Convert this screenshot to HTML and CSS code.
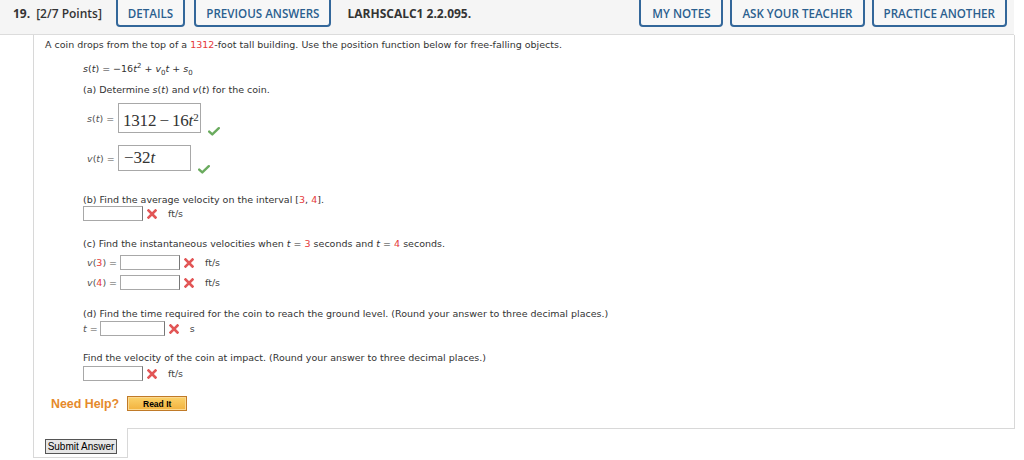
FILE: index.html
```html
<!DOCTYPE html>
<html>
<head>
<meta charset="utf-8">
<link rel="stylesheet" href="styles.css">
</head>
<body>
<div class="header">
  <span class="qnum">19.</span>
  <span class="pts">[2/7 Points]</span>
  <button class="hbtn first">DETAILS</button>
  <button class="hbtn">PREVIOUS ANSWERS</button>
  <span class="code">LARHSCALC1 2.2.095.</span>
  <div class="right">
    <button class="hbtn notes">MY NOTES</button>
    <button class="hbtn">ASK YOUR TEACHER</button>
    <button class="hbtn">PRACTICE ANOTHER</button>
  </div>
</div>
<div class="content">
  <div class="line intro">A coin drops from the top of a <span class="red">1312</span>-foot tall building. Use the position function below for free-falling objects.</div>
  <div class="part">
    <div class="line formula"><i>s</i>(<i>t</i>) = &minus;16<i>t</i><sup>2</sup> + <i>v</i><sub>0</sub><i>t</i> + <i>s</i><sub>0</sub></div>
    <div class="line qa">(a) Determine <i>s</i>(<i>t</i>) and <i>v</i>(<i>t</i>) for the coin.</div>
    <div class="row srow">
      <span class="lbl"><i>s</i>(<i>t</i>) =</span>
      <span class="mathbox sbox">1312&thinsp;&minus;&thinsp;16<i>t</i><sup>2</sup></span>
      <svg class="check" width="12" height="9" viewBox="0 0 12 9"><path d="M1.2 4.6 L4.3 7.4 L10.8 1.2" fill="none" stroke="#6aab5e" stroke-width="2.4" stroke-linecap="round" stroke-linejoin="round"/></svg>
    </div>
    <div class="row vrow">
      <span class="lbl"><i>v</i>(<i>t</i>) =</span>
      <span class="mathbox vbox">&minus;32<i>t</i></span>
      <svg class="check" width="12" height="9" viewBox="0 0 12 9"><path d="M1.2 4.6 L4.3 7.4 L10.8 1.2" fill="none" stroke="#6aab5e" stroke-width="2.4" stroke-linecap="round" stroke-linejoin="round"/></svg>
    </div>

    <div class="line qb">(b) Find the average velocity on the interval [<span class="red">3</span>, <span class="red">4</span>].</div>
    <div class="row ansrow">
      <span class="field"></span>
      <svg class="xmark" width="10" height="10" viewBox="0 0 10 10"><path d="M1.5 1.5 L8.5 8.5 M8.5 1.5 L1.5 8.5" stroke="#e25656" stroke-width="2.6" stroke-linecap="square"/></svg>
      <span class="unit">ft/s</span>
    </div>

    <div class="line qc">(c) Find the instantaneous velocities when <i>t</i> = <span class="red">3</span> seconds and <i>t</i> = <span class="red">4</span> seconds.</div>
    <div class="row crow c1">
      <span class="clbl"><i>v</i>(<span class="red">3</span>) =</span>
      <span class="field"></span>
      <svg class="xmark" width="10" height="10" viewBox="0 0 10 10"><path d="M1.5 1.5 L8.5 8.5 M8.5 1.5 L1.5 8.5" stroke="#e25656" stroke-width="2.6" stroke-linecap="square"/></svg>
      <span class="unit">ft/s</span>
    </div>
    <div class="row crow c2">
      <span class="clbl"><i>v</i>(<span class="red">4</span>) =</span>
      <span class="field"></span>
      <svg class="xmark" width="10" height="10" viewBox="0 0 10 10"><path d="M1.5 1.5 L8.5 8.5 M8.5 1.5 L1.5 8.5" stroke="#e25656" stroke-width="2.6" stroke-linecap="square"/></svg>
      <span class="unit">ft/s</span>
    </div>

    <div class="line qd">(d) Find the time required for the coin to reach the ground level. (Round your answer to three decimal places.)</div>
    <div class="row drow">
      <span class="tlbl"><i>t</i> =</span>
      <span class="field wide"></span>
      <svg class="xmark" width="10" height="10" viewBox="0 0 10 10"><path d="M1.5 1.5 L8.5 8.5 M8.5 1.5 L1.5 8.5" stroke="#e25656" stroke-width="2.6" stroke-linecap="square"/></svg>
      <span class="unit">s</span>
    </div>

    <div class="line qe">Find the velocity of the coin at impact. (Round your answer to three decimal places.)</div>
    <div class="row ansrow">
      <span class="field"></span>
      <svg class="xmark" width="10" height="10" viewBox="0 0 10 10"><path d="M1.5 1.5 L8.5 8.5 M8.5 1.5 L1.5 8.5" stroke="#e25656" stroke-width="2.6" stroke-linecap="square"/></svg>
      <span class="unit">ft/s</span>
    </div>
  </div>
  <div class="help">
    <span class="needhelp">Need Help?</span>
    <button class="readit">Read It</button>
  </div>
</div>
<div class="submit-tab"><button class="submit">Submit Answer</button></div>
</body>
</html>
```

FILE: styles.css
```css
html, body {
  margin: 0;
  padding: 0;
  background: #fff;
}
body {
  width: 1024px;
  height: 460px;
  overflow: hidden;
  font-family: "DejaVu Sans", Verdana, sans-serif;
  color: #333;
}
.header {
  width: 1007px;
  height: 34px;
  padding-right: 7px;
  background: #f5f5f5;
  border-bottom: 1px solid #dcdcdc;
  display: flex;
  align-items: flex-start;
  font-family: "Open Sans", sans-serif;
  font-size: 12px;
  font-weight: 700;
  color: #333;
  overflow: hidden;
}
.qnum {
  margin-left: 13px;
  line-height: 27px;
}
.pts {
  margin-left: 6px;
  line-height: 27px;
  font-weight: 600;
}
.code {
  margin-left: 16px;
  line-height: 27px;
}
.hbtn {
  margin-top: -6px;
  height: 33px;
  padding: 6px 10px 0;
  margin-left: 9px;
  border: 2px solid #33679a;
  border-radius: 4px;
  background: #f7f7f7;
  color: #2b5f8f;
  font-family: "Open Sans", sans-serif;
  font-size: 11.6px;
  font-weight: 600;
  white-space: nowrap;
}
.hbtn.first {
  margin-left: 14px;
}
.hbtn.notes {
  min-width: 84px;
}
.right {
  margin-left: auto;
  display: flex;
  gap: 7px;
}
.right .hbtn {
  margin-left: 0;
}
.content {
  margin-left: 33px;
  width: 980px;
  border-left: 1px solid #d8d8d8;
  border-right: 1px solid #d8d8d8;
  border-bottom: 1px solid #d8d8d8;
  padding-top: 4px;
  padding-bottom: 17px;
  font-size: 9.5px;
}
.line {
  line-height: 12px;
  white-space: nowrap;
}
.intro {
  margin-left: 11px;
}
.red {
  color: #e53a3a;
}
sup, sub {
  font-size: 7px;
  line-height: 0;
}
.part {
  margin-left: 49px;
}
.formula {
  margin-top: 12px;
}
.qa {
  margin-top: 9px;
}
.row {
  display: flex;
  align-items: center;
  height: 15px;
}
.row > span {
  flex: none;
  white-space: nowrap;
}
.lbl {
  width: 31px;
  padding-left: 4px;
  color: #555;
}
.mathbox {
  box-sizing: border-box;
  border: 1px solid #a8a8a8;
  font-family: "Liberation Serif", "DejaVu Serif", serif;
  font-size: 17px;
  color: #333;
  padding-left: 5px;
  display: flex;
  align-items: center;
  white-space: pre;
}
.mathbox sup {
  font-size: 11px;
  position: relative;
  top: -4px;
  margin-left: 0;
}
.srow {
  margin-top: 7px;
  height: 30px;
}
.sbox {
  width: 83px;
  height: 30px;
  padding-top: 5px;
  padding-left: 4px;
  letter-spacing: -0.2px;
}
.vrow {
  margin-top: 12px;
  height: 26px;
}
.vbox {
  width: 73px;
  height: 26px;
}
.check {
  align-self: flex-end;
  margin-bottom: -3px;
  margin-left: 7px;
}
.qb {
  margin-top: 23px;
}
.field {
  box-sizing: border-box;
  width: 60px;
  height: 15px;
  border: 1px solid #a8a8a8;
  border-right-color: #777;
  background: #fff;
}
.field.wide {
  width: 65px;
}
.xmark {
  margin-left: 4px;
  flex: none;
}
.unit {
  margin-left: 11px;
  color: #444;
}
.qc {
  margin-top: 17px;
}
.crow.c1 {
  margin-top: 5px;
}
.crow.c2 {
  margin-top: 5px;
}
.clbl {
  width: 33px;
  padding-left: 4px;
  color: #555;
}
.qd {
  margin-top: 18px;
}
.drow {
  margin-top: 1px;
}
.tlbl {
  margin-right: 2px;
  color: #555;
}
.qe {
  margin-top: 16px;
}
.qe + .ansrow {
  margin-top: 2px;
}
.help {
  margin-top: 15px;
  margin-left: 17px;
  display: flex;
  align-items: center;
  height: 15px;
}
.needhelp {
  font-family: "Liberation Sans", Arial, sans-serif;
  font-weight: 700;
  font-size: 12.4px;
  color: #e58a2c;
}
.readit {
  margin-left: 8px;
  box-sizing: border-box;
  width: 60px;
  height: 15px;
  padding: 0;
  border: 1px solid #c07a28;
  box-shadow: inset 0 0 0 1px #fcd98f;
  background: linear-gradient(#fbd26a, #f2b23e);
  font-family: "Liberation Sans", Arial, sans-serif;
  font-size: 8.5px;
  font-weight: 700;
  color: #000;
}
.submit-tab {
  margin-left: 33px;
  margin-top: -1px;
  width: 82px;
  padding: 7px 0 6px 11px;
  height: 16px;
  background: #fff;
  border-left: 1px solid #d8d8d8;
  border-right: 1px solid #d8d8d8;
  border-bottom: 1px solid #d8d8d8;
}
.submit {
  box-sizing: border-box;
  width: 72px;
  height: 15px;
  padding: 0;
  border: 1px solid #555;
  background: #e6e6e6;
  font-family: "Liberation Sans", Arial, sans-serif;
  font-size: 10px;
  color: #000;
}
```
